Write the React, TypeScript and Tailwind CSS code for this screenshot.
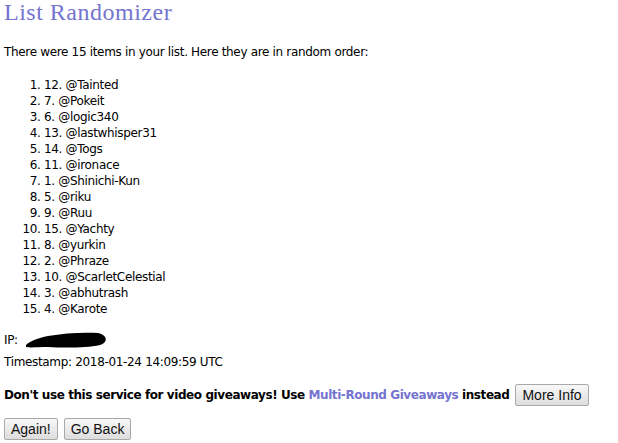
const items = [
  "12. @Tainted",
  "7. @Pokeit",
  "6. @logic340",
  "13. @lastwhisper31",
  "14. @Togs",
  "11. @ironace",
  "1. @Shinichi-Kun",
  "5. @riku",
  "9. @Ruu",
  "15. @Yachty",
  "8. @yurkin",
  "2. @Phraze",
  "10. @ScarletCelestial",
  "3. @abhutrash",
  "4. @Karote",
];

function Btn({ children }: { children: React.ReactNode }) {
  return (
    <button className="h-[22px] px-[6px] border border-[#a9a9a9] rounded-[2px] bg-gradient-to-b from-[#f8f8f8] to-[#dddddd] text-[14px] leading-[20px] text-[#111] tracking-normal font-normal font-['Liberation_Sans',Arial,sans-serif]">
      {children}
    </button>
  );
}

export default function App() {
  return (
    <div className="w-[618px] h-[443px] bg-white text-black px-[4px] font-['DejaVu_Sans',sans-serif] text-[12px] leading-[16px] tracking-[-0.33px] overflow-hidden">
      <h1 className="text-[24px] leading-[24px] text-[#7474d0] font-normal tracking-[0.5px] font-['Liberation_Serif',serif]">
        List Randomizer
      </h1>
      <p className="mt-[20px]">There were 15 items in your list. Here they are in random order:</p>
      <ol className="mt-[17px] pl-[40px] list-decimal">
        {items.map((it) => (
          <li key={it} className="leading-[16px]">
            {it}
          </li>
        ))}
      </ol>
      <div className="mt-[15px] flex items-center h-[16px]">
        <span>IP: </span>
        <svg width="84" height="17" viewBox="0 0 84 17" className="ml-[6px]">
          <path
            d="M2 13 C 6 9, 14 6, 24 4 C 40 1, 60 0, 74 1 C 84 3, 84 11, 76 13 C 62 16, 40 16, 24 15 C 14 15, 6 16, 2 15 Z"
            fill="#000"
          />
        </svg>
      </div>
      <div className="mt-[6px]">Timestamp: 2018-01-24 14:09:59 UTC</div>
      <div className="mt-[14px] flex items-center h-[22px] font-bold tracking-[-0.42px]">
        <span>
          Don't use this service for video giveaways! Use{" "}
          <span className="text-[#7474d0]">Multi-Round Giveaways</span> instead
        </span>
        <span className="ml-[6px]">
          <Btn>More Info</Btn>
        </span>
      </div>
      <div className="mt-[12px] flex gap-[6px]">
        <Btn>Again!</Btn>
        <Btn>Go Back</Btn>
      </div>
    </div>
  );
}
